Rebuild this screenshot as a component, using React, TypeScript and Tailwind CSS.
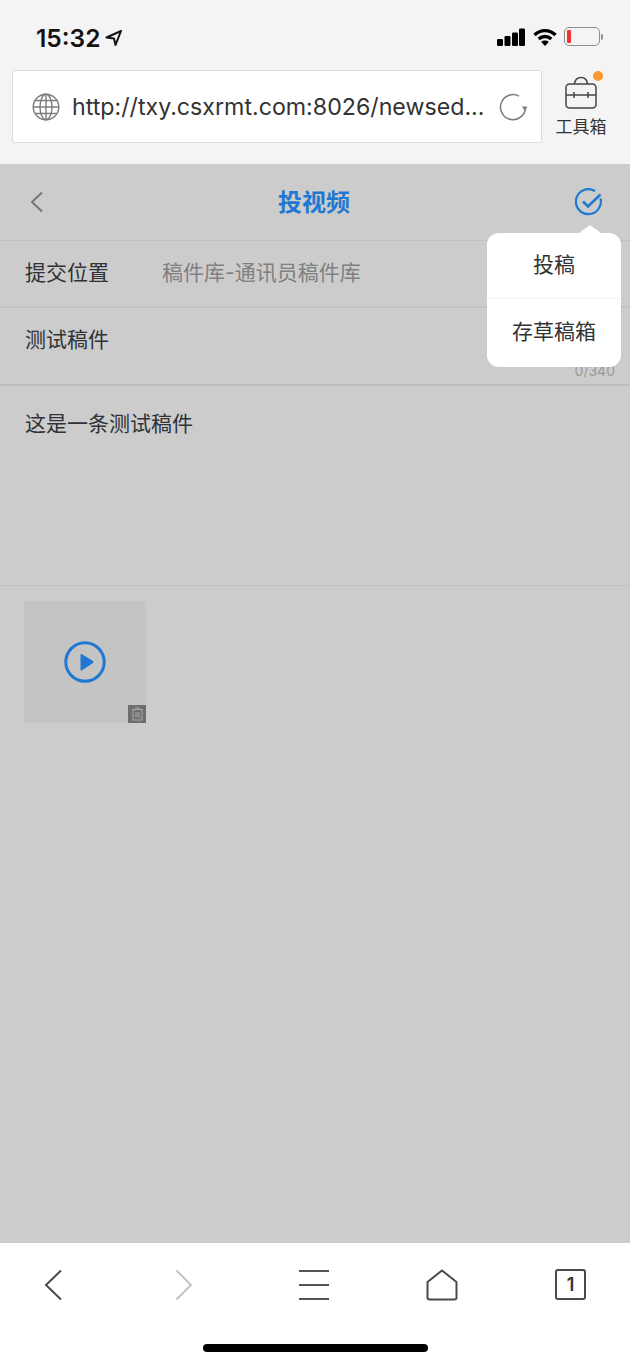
import React from 'react';

const font = { fontFamily: 'Inter, "Noto Sans CJK SC", sans-serif' };

const StatusBar = () => (
  <div className="flex h-[70px] items-start justify-between pl-[36px] pr-[27px] pt-[24px]">
    <div className="flex items-center gap-[5px]">
      <span className="text-[24.5px] leading-[28px] font-semibold text-[#111]">15:32</span>
      <svg width="18" height="18" viewBox="0 0 18 18" fill="none" stroke="#111" strokeWidth="2" strokeLinejoin="round">
        <path d="M1.5 8.5 16 2l-5.5 14-1.5-6.5z" />
      </svg>
    </div>
    <div className="flex items-center pt-[3px]">
      <svg width="28" height="18" viewBox="0 0 28 18" fill="#000">
        <rect x="0" y="11" width="6" height="7" rx="1.2" />
        <rect x="7.500" y="8" width="6" height="10" rx="1.2" />
        <rect x="15" y="4.500" width="6" height="13.500" rx="1.2" />
        <rect x="22" y="0.500" width="6" height="17.500" rx="1.2" />
      </svg>
      <svg width="24" height="18" viewBox="0 0 24 18" fill="none" stroke="#000" strokeWidth="3.400" className="ml-[8px]">
        <path d="M1.500 7c6-5.800 15-5.800 21 0" />
        <path d="M5.700 11c3.600-3.300 9-3.300 12.600 0" />
        <path d="M12 18 8.200 14c2.200-1.900 5.400-1.900 7.600 0z" fill="#000" stroke="none" />
      </svg>
      <div className="ml-[7px] flex items-center">
        <div className="flex h-[19px] w-[36px] items-center rounded-[5px] border-[1.5px] border-[#8e8e8e] px-[2px]">
          <div className="h-[13px] w-[4px] rounded-[1px] bg-[#f4312f]" />
        </div>
        <div className="ml-[1px] h-[6px] w-[2px] rounded-r-[2px] bg-[#8e8e8e]" />
      </div>
    </div>
  </div>
);

const AddressBar = () => (
  <div className="flex h-[94px] items-start pl-[12px]">
    <div className="flex h-[73px] w-[530px] items-center rounded-[3px] border border-[#dcdcdc] bg-white pl-[19px] pr-[14px]">
      <svg width="28" height="28" viewBox="0 0 28 28" fill="none" stroke="#7d7d7d" strokeWidth="1.400" className="shrink-0">
        <circle cx="14" cy="14" r="12.800" />
        <ellipse cx="14" cy="14" rx="6" ry="12.800" />
        <path d="M14 1.200v25.600M1.200 14h25.600M3 7.500h22M3 20.500h22" />
      </svg>
      <span className="ml-[12px] flex-1 whitespace-nowrap text-[23.2px] leading-[30px] text-[#333]">http://txy.csxrmt.com:8026/newsed...</span>
      <svg width="28" height="28" viewBox="0 0 28 28" fill="none" className="shrink-0">
        <path d="M26.500 14A12.500 12.500 0 1 1 20 3.200" stroke="#7a7a7a" strokeWidth="1.500" />
        <path d="M23 13.500h5.500L25.500 17.500z" fill="#7a7a7a" />
      </svg>
    </div>
    <div className="relative flex w-[78px] flex-col items-center pt-[6px]">
      <svg width="32" height="33" viewBox="0 0 32 33" fill="none" stroke="#444" strokeWidth="1.500">
        <path d="M9.500 8C10 3.500 12.500 1.500 16 1.500S22 3.500 22.500 8" />
        <rect x="1" y="8" width="30" height="24" rx="3.500" />
        <path d="M1 19h30M9 16v6M23 16v6" />
      </svg>
      <div className="absolute left-[51px] top-[1px] h-[10px] w-[10px] rounded-full bg-[#f9992c]" />
      <span className="mt-[7px] text-[17px] leading-[22px] text-[#333]">工具箱</span>
    </div>
  </div>
);

const Popover = () => (
  <div className="absolute left-[487px] top-[69px] w-[134px]">
    <div className="absolute left-[92px] top-[-8px] h-0 w-0 border-x-[11px] border-b-[8px] border-x-transparent border-b-white" />
    <div className="overflow-hidden rounded-[12px] bg-white">
      <div className="flex h-[66px] items-center justify-center border-b border-[#f3f3f3] pb-[2px] text-[21px] text-[#333]">投稿</div>
      <div className="flex h-[68px] items-center justify-center pb-[2px] text-[21px] text-[#333]">存草稿箱</div>
    </div>
  </div>
);

const Form = () => (
  <div className="relative flex-1 bg-[#cccccc]">
    <div className="flex h-[77px] items-center justify-between border-b border-[#c2c2c2] pl-[29px] pr-[27px]">
      <div className="w-[24px]">
        <svg width="16" height="24" viewBox="0 0 16 24" fill="none" stroke="#777" strokeWidth="2">
          <path d="M13 2.500 3 12l10 9.500" />
        </svg>
      </div>
      <span className="mt-[2px] text-[24px] font-bold text-[#1f78d1]">投视频</span>
      <svg width="28" height="28" viewBox="0 0 28 28" fill="none" stroke="#1f78d1" strokeWidth="2.200">
        <path d="M25.500 10.500A12.500 12.500 0 1 1 20 3" />
        <path d="M8 13.500l5 5L25.500 6.500" strokeWidth="2.600" />
      </svg>
    </div>
    <div className="flex h-[67px] items-center border-b-2 border-[#c2c2c2] pb-[2px] pl-[25px] text-[21px]">
      <span className="w-[137px] text-[#2f3236]">提交位置</span>
      <span className="text-[#808080]">稿件库-通讯员稿件库</span>
    </div>
    <div className="relative h-[78px] border-b-2 border-[#bfbfbf] pl-[25px] pt-[17px] text-[21px] leading-[30px] text-[#2f3236]">
      测试稿件
      <span className="absolute bottom-[4px] right-[15px] text-[14px] leading-[18px] text-[#9a9a9a]">0/340</span>
    </div>
    <div className="h-[200px] border-b border-[#c2c2c2] pl-[25px] pt-[23px] text-[21px] leading-[30px] text-[#2f3236]">
      这是一条测试稿件
    </div>
    <div className="pl-[24px] pt-[15px]">
      <div className="relative flex h-[122px] w-[122px] items-center justify-center bg-[#c4c4c4]">
        <svg width="42" height="42" viewBox="0 0 42 42" fill="none">
          <circle cx="21" cy="21" r="19.200" stroke="#1f78d1" strokeWidth="3" />
          <path d="M16.500 13.500v15a1 1 0 0 0 1.500.8L29 22a1.200 1.200 0 0 0 0-2l-11-6.800a1 1 0 0 0-1.500.3z" fill="#1f78d1" />
        </svg>
        <div className="absolute bottom-0 right-0 flex h-[18px] w-[18px] items-center justify-center bg-[#6e6e6e]">
          <svg width="13" height="14" viewBox="0 0 13 14" fill="none" stroke="#a8a8a8" strokeWidth="1">
            <path d="M4 1h5M1 2.500h11" />
            <rect x="2" y="2.500" width="9" height="10.500" />
            <rect x="4" y="5" width="5" height="5.500" fill="#8c8c8c" stroke="none" />
          </svg>
        </div>
      </div>
    </div>
    <Popover />
  </div>
);

const BottomBar = () => (
  <div className="flex h-[121px] shrink-0 flex-col bg-white">
    <div className="flex h-[101px] items-start justify-between pl-[37px] pr-[44px] pt-[26px]">
      <div className="flex w-[32px] justify-center">
        <svg width="18" height="32" viewBox="0 0 18 32" fill="none" stroke="#4a4a4a" strokeWidth="2">
          <path d="M17 1.500 2 16l15 14.500" />
        </svg>
      </div>
      <div className="ml-[2px] flex w-[32px] justify-center">
        <svg width="18" height="32" viewBox="0 0 18 32" fill="none" stroke="#c4c4c4" strokeWidth="2">
          <path d="M1.500 1.500 16 16 1.500 30.500" />
        </svg>
      </div>
      <div className="ml-[2px] flex h-[32px] w-[30px] flex-col justify-between py-[1px]">
        <div className="h-[2px] bg-[#555]" />
        <div className="h-[2px] bg-[#555]" />
        <div className="h-[2px] bg-[#555]" />
      </div>
      <svg width="32" height="32" viewBox="0 0 32 32" fill="none" stroke="#4a4a4a" strokeWidth="2" strokeLinejoin="round">
        <path d="M16 1.500 30.500 13v15.500a2 2 0 0 1-2 2h-25a2 2 0 0 1-2-2V13z" />
      </svg>
      <div className="flex h-[31px] w-[31px] items-center justify-center rounded-[3px] border-2 border-[#4a4a4a] text-[18px] font-semibold text-[#333]">1</div>
    </div>
    <div className="flex justify-center">
      <div className="h-[8px] w-[225px] rounded-full bg-black" />
    </div>
  </div>
);

export default function App() {
  return (
    <div className="flex h-[1364px] w-[630px] flex-col overflow-hidden bg-[#f4f4f4]" style={font}>
      <StatusBar />
      <AddressBar />
      <Form />
      <BottomBar />
    </div>
  );
}
